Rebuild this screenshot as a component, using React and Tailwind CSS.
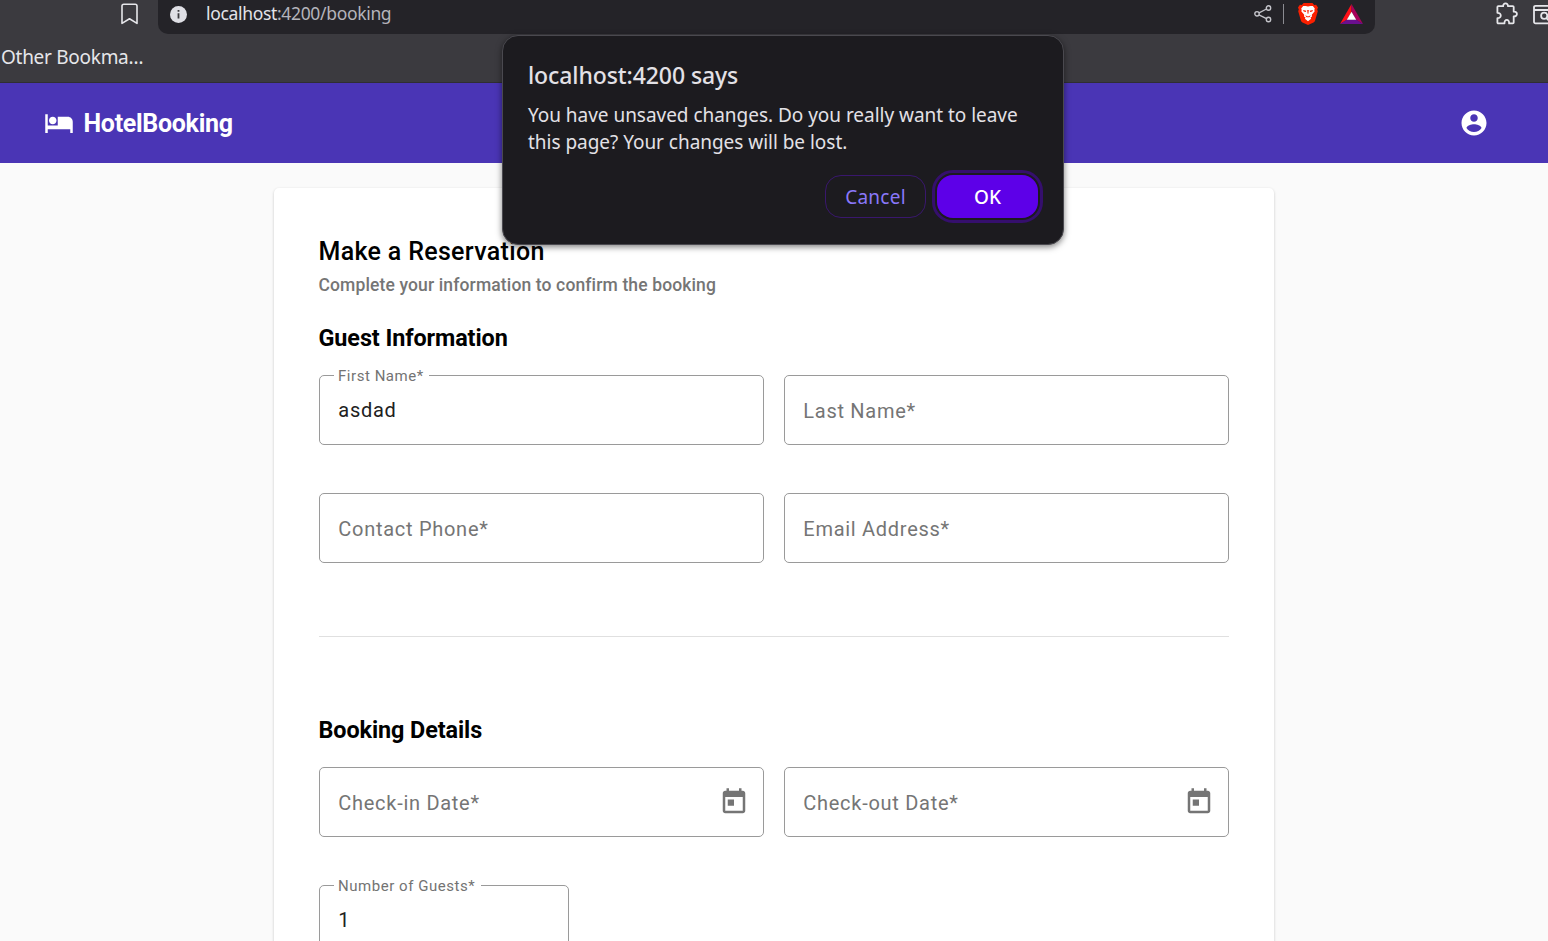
import React from "react";

const RedLion = () => (
  <svg className="h-[22px] w-[20px]" viewBox="0 0 20 22">
    <path d="M5.6 0h8.8l1.8 2 1.9-.2L20 4.4l-.8 2 .6 1.8-2.7 9.2c-.3 1-.8 1.6-1.6 2.200L10 22l-5.500-2.400c-.8-.6-1.300-1.200-1.600-2.200L.2 8.200l.6-1.800-.8-2 1.900-2.600 1.900.2z" fill="#fb2000" />
    <path d="M10 3.600l2.300-.5 2.500-.2 2 2.700-.5 1.400.4 1.300-2.900 3.400.2 1.700-1.500 1.100.6 1.200L10 18.200l-3.100-2.500.6-1.200L6 13.400l.2-1.700L3.300 8.300l.4-1.300-.5-1.400 2-2.700 2.500.2z" fill="#fff" />
    <path d="M5 6.900l3.300.8-.5 1.400-2.100-.5zM15 6.900l-3.300.8.5 1.400 2.100-.5zM9.200 7h1.600l-.4 3.800h-.8zM7.200 12.200l2.800 1.300 2.800-1.300-1.400 2H8.600z" fill="#fb2000" />
  </svg>
);

const Triangle = () => (
  <svg className="h-[20px] w-[23px]" viewBox="0 0 23 20">
    <path d="M11.500 0L0 20l7-4.300 4.500-8z" fill="#ff1018" />
    <path d="M11.500 0L23 20l-7-4.300-4.500-8z" fill="#a8005c" />
    <path d="M0 20h23l-7-4.500H7z" fill="#6a0f8e" />
    <path d="M11.500 7.700l4.700 8H6.800z" fill="#fff" />
  </svg>
);

const Today = () => (
  <svg className="h-[30px] w-[30px] shrink-0 -mt-px" viewBox="0 0 24 24" fill="#757575">
    <path d="M19 3h-1V1h-2v2H8V1H6v2H5c-1.110 0-1.990.9-1.990 2L3 19c0 1.100.89 2 2 2h14c1.100 0 2-.9 2-2V5c0-1.100-.9-2-2-2zm0 16H5V8h14v11zM7 10h5v5H7z" />
  </svg>
);

function Field({ label, value, date, className = "" }) {
  return (
    <div className={`relative flex h-[70px] items-center justify-between rounded-[5px] border border-[#9a9a9a] pr-[14px] pl-[18.300px] text-[20px] tracking-[0.72px] ${className}`}>
      {value ? (
        <>
          <span className="absolute top-[-10px] left-[14px] bg-white pr-[5.500px] pl-1 text-[15px] leading-[20px] tracking-[0.54px] text-[#737373]">{label}*</span>
          <span className="text-[#212121]">{value}</span>
        </>
      ) : (
        <span className="pt-[2px] text-[#757575]">{label}*</span>
      )}
      {date && <Today />}
    </div>
  );
}

function BrowserBar() {
  return (
    <div className="flex h-[83px] flex-col border-b border-[#2f2e33] bg-[#3b3a3f] font-['Noto_Sans',sans-serif]">
      <div className="flex h-[34px] shrink-0 items-start">
        <svg className="mt-[3px] ml-[121px] h-[22px] w-[17px] shrink-0" viewBox="0 0 17 22" fill="none" stroke="#e6e6ea" strokeWidth="1.6" strokeLinejoin="round">
          <path d="M1 3a1.800 1.800 0 0 1 1.800-1.800h11.400A1.800 1.800 0 0 1 16 3v17.400l-7.500-4.600L1 20.400z" />
        </svg>
        <div className="ml-[20px] flex h-[34px] w-[1217px] shrink-0 rounded-b-[10px] bg-[#242328] pl-[11.500px]">
          <svg className="mt-[6px] h-[17px] w-[17px]" viewBox="0 0 17 17">
            <circle cx="8.500" cy="8.500" r="8.500" fill="#dfdfe5" />
            <path d="M7.600 4h1.800v1.800H7.600zM7.600 7.200h1.800v5.300H7.600z" fill="#3b3a3f" />
          </svg>
          <div className="ml-[19.500px] w-[1048px] text-[17.500px] leading-[26px] tracking-[-0.33px] text-[#b4b4bb]"><span className="text-[#e3e3e8]">localhost</span>:4200/booking</div>
          <svg className="mt-[5px] h-[18px] w-[18px]" viewBox="0 0 18 18" fill="none" stroke="#c4c4ca" strokeWidth="1.400">
            <circle cx="3" cy="8.800" r="2.200" />
            <circle cx="14.500" cy="3" r="2.200" />
            <circle cx="14.500" cy="14.500" r="2.200" />
            <path d="M5 7.800l7.500-3.800M5 9.800l7.500 3.800" />
          </svg>
          <div className="mt-1 ml-[11px] h-[20px] w-px bg-[#8b8b91]" />
          <div className="mt-[3px] ml-[14px]"><RedLion /></div>
          <div className="mt-1 ml-[22px]"><Triangle /></div>
        </div>
        <svg className="mt-[2px] ml-[119.500px] h-[23px] w-[23px] shrink-0" viewBox="0 0 23 23" fill="none" stroke="#e6e6ea" strokeWidth="1.800" strokeLinejoin="round">
          <path d="M3.300 4.200h4.900c-.4-3.700 5.100-3.700 4.700 0h4.900c.5 0 .9.4.9.9v4.600c4.300-.5 4.300 5 0 4.700v6.100c0 .5-.4.9-.9.9h-3.700c.4-4.700-5-4.700-4.600 0H3.300c-.5 0-.9-.4-.9-.9v-4.300c4.500.2 4.500-5.600 0-5.400V5.100c0-.5.4-.9.9-.9z" />
        </svg>
        <svg className="mt-[4px] ml-[15px] h-[22px] w-[22px] shrink-0" viewBox="0 0 22 22" fill="none" stroke="#e6e6ea" strokeWidth="1.800">
          <rect x="1" y="1.800" width="20" height="17.500" rx="1.500" />
          <path d="M1 6h20M13.500 14.200l3.500 3.500" />
          <circle cx="11.200" cy="11.800" r="3.100" />
        </svg>
      </div>
      <div className="mt-[9px] ml-px text-[19px] leading-[28px] tracking-[-0.28px] text-[#e6e6ea]">Other Bookma…</div>
    </div>
  );
}

function AlertDialog() {
  return (
    <div role="dialog" className="absolute top-[35px] left-[502px] h-[210px] w-[562px] rounded-[16px] border border-[#4a494f] bg-[#1c1b1f] px-[25px] font-['Noto_Sans',sans-serif] text-[#e3e1e6] shadow-[0_2px_6px_rgba(0,0,0,0.5)]">
      <h1 className="mt-[23px] text-[23px] leading-[32px] font-medium tracking-[-0.09px] whitespace-nowrap">localhost:4200 says</h1>
      <p className="mt-[11px] text-[19px] leading-[27px] tracking-[-0.03px] whitespace-nowrap">You have unsaved changes. Do you really want to leave<br />this page? Your changes will be lost.</p>
      <div className="mt-[19px] flex justify-end gap-[11px] text-[19px]">
        <button className="h-[43px] w-[101px] rounded-[16px] border border-[#39176d] pt-[2px] tracking-[0.25px] text-[#8a78fa]">Cancel</button>
        <button className="h-[43px] w-[101px] rounded-[16px] bg-[#5d00e8] pt-[2px] font-medium text-white outline-[3px] outline-offset-[2px] outline-[#350f6d]">OK</button>
      </div>
    </div>
  );
}

export default function App() {
  return (
    <div className="relative h-[941px] w-[1548px] overflow-hidden bg-[#fafafa] font-['Roboto',sans-serif]">
      <BrowserBar />
      <header className="flex h-[80px] items-center bg-[#4a35b5] text-white">
        <svg className="ml-[43.500px] h-[30px] w-[30px]" viewBox="0 0 24 24" fill="currentColor">
          <path d="M7 13c1.660 0 3-1.340 3-3S8.660 7 7 7s-3 1.340-3 3 1.340 3 3 3zm12-6h-8v7H3V5H1v15h2v-3h18v3h2v-9c0-2.210-1.790-4-4-4z" />
        </svg>
        <span className="ml-[10px] pt-[2px] text-[25px] font-bold tracking-[-0.3px]">HotelBooking</span>
        <svg className="mr-[59.500px] ml-auto h-[30px] w-[30px]" viewBox="0 0 24 24" fill="currentColor">
          <path d="M12 2C6.480 2 2 6.480 2 12s4.480 10 10 10 10-4.480 10-10S17.520 2 12 2zm0 3c1.660 0 3 1.340 3 3s-1.340 3-3 3-3-1.340-3-3 1.340-3 3-3zm0 14.200c-2.500 0-4.710-1.280-6-3.220.03-1.990 4-3.080 6-3.080 1.990 0 5.970 1.090 6 3.080-1.290 1.940-3.500 3.220-6 3.220z" />
        </svg>
      </header>
      <main className="mx-auto mt-[25px] h-[800px] w-[1000px] rounded-[5px] bg-white px-[45px] pt-[48px] shadow-[0_1px_3px_rgba(0,0,0,0.2)]">
        <h2 className="-ml-[0.500px] text-[25px] leading-[32px] font-medium tracking-[0.32px] text-black">Make a Reservation</h2>
        <p className="mt-[3px] -ml-[0.500px] text-[17.500px] leading-[28px] font-medium tracking-[0.13px] text-[#757575]">Complete your information to confirm the booking</p>
        <h3 className="mt-[24px] -ml-[0.500px] text-[23.400px] leading-[30px] font-bold tracking-[-0.09px] text-black">Guest Information</h3>
        <div className="mt-[22px] grid grid-cols-2 gap-x-[20px] gap-y-[48px]">
          <Field label="First Name" value="asdad" />
          <Field label="Last Name" />
          <Field label="Contact Phone" />
          <Field label="Email Address" />
        </div>
        <hr className="mt-[73px] border-[#e0e0e0]" />
        <h3 className="mt-[78px] -ml-[0.500px] text-[23.400px] leading-[30px] font-bold tracking-[-0.09px] text-black">Booking Details</h3>
        <div className="mt-[22px] grid grid-cols-2 gap-x-[20px] gap-y-[48px]">
          <Field label="Check-in Date" date />
          <Field label="Check-out Date" date />
          <Field label="Number of Guests" value="1" className="w-[250px]" />
        </div>
      </main>
      <AlertDialog />
    </div>
  );
}
